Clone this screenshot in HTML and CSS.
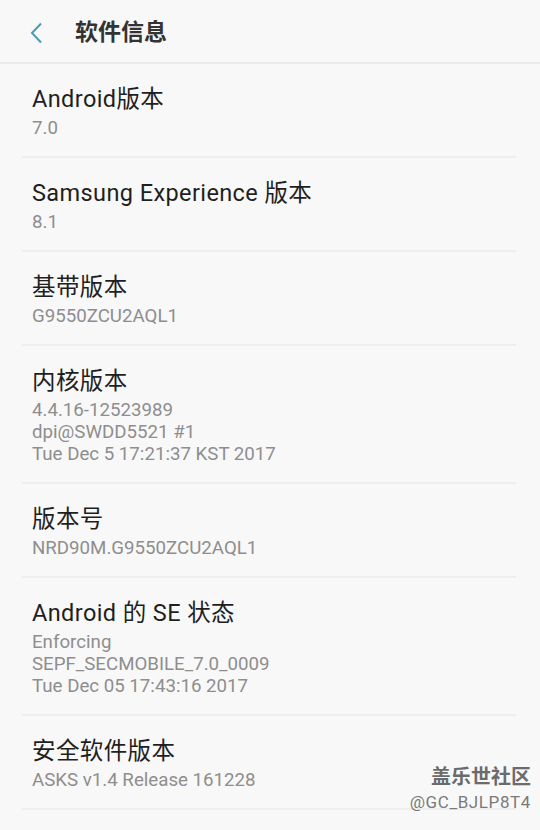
FILE: index.html
```html
<!DOCTYPE html>
<html lang="zh">
<head>
<meta charset="utf-8">
<title>软件信息</title>
<link rel="stylesheet" href="styles.css">
</head>
<body>
<div class="page">
  <header class="header">
    <svg class="back" width="14" height="22" viewBox="0 0 14 22"><path d="M12 1.5 L3 11 L12 20.5" fill="none" stroke="#4f9ab3" stroke-width="2"/></svg>
    <h1 class="header-title">软件信息</h1>
  </header>
  <ul class="list">
    <li class="item"><div class="title">Android版本</div><div class="sub">7.0</div></li>
    <li class="item"><div class="title">Samsung Experience 版本</div><div class="sub">8.1</div></li>
    <li class="item"><div class="title">基带版本</div><div class="sub">G9550ZCU2AQL1</div></li>
    <li class="item"><div class="title">内核版本</div><div class="sub">4.4.16-12523989</div><div class="sub">dpi@SWDD5521 #1</div><div class="sub">Tue Dec 5 17:21:37 KST 2017</div></li>
    <li class="item"><div class="title">版本号</div><div class="sub">NRD90M.G9550ZCU2AQL1</div></li>
    <li class="item"><div class="title">Android 的 SE 状态</div><div class="sub">Enforcing</div><div class="sub">SEPF_SECMOBILE_7.0_0009</div><div class="sub">Tue Dec 05 17:43:16 2017</div></li>
    <li class="item"><div class="title">安全软件版本</div><div class="sub">ASKS v1.4 Release 161228</div></li>
  </ul>
  <div class="watermark">
    <div class="wm-name">盖乐世社区</div>
    <div class="wm-id">@GC_BJLP8T4</div>
  </div>
</div>
</body>
</html>
```
FILE: styles.css
```css
html, body {
  margin: 0;
  padding: 0;
  background: #f8f8f8;
}
body {
  font-family: Roboto, "Noto Sans CJK SC", sans-serif;
  color: #222;
}
.page {
  position: relative;
  width: 540px;
  height: 830px;
  overflow: hidden;
}
.header {
  display: flex;
  align-items: center;
  border-bottom: 2px solid #ebebeb;
  box-sizing: border-box;
  height: 64px;
  padding-left: 29px;
  padding-top: 4px;
}
.back {
  display: block;
}
.header-title {
  margin: 0 0 0 32px;
  font-size: 23px;
  font-weight: 700;
  color: #333;
  line-height: 30px;
}
.list {
  list-style: none;
  margin: 0;
  padding: 0;
}
.item {
  margin: 0 24px 0 22px;
  padding: 17px 0 17px 10px;
  border-bottom: 2px solid #eeeeee;
}
.title {
  font-size: 23.5px;
  letter-spacing: 0.4px;
  line-height: 36px;
  color: #1f1f1f;
}
.sub {
  font-size: 18.7px;
  line-height: 22px;
  color: #8e8e8e;
}
.watermark {
  position: absolute;
  right: 9px;
  top: 764px;
  text-align: right;
}
.wm-name {
  font-size: 20px;
  font-weight: 700;
  color: #6b6b6b;
  line-height: 26px;
}
.wm-id {
  font-size: 17px;
  color: #7a7a7a;
  line-height: 24px;
  letter-spacing: 0.6px;
}
```
